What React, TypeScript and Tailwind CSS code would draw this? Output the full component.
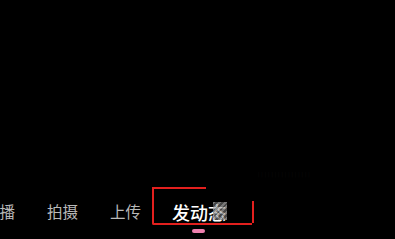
import React from "react";

const tabs = ["直播", "拍摄", "上传"];

export default function App() {
  return (
    <div
      className="relative w-[395px] h-[239px] bg-black overflow-hidden"
      style={{ fontFamily: '"Noto Sans CJK SC", "Noto Sans", sans-serif' }}
    >
      {/* faint caption near the top right */}
      <div className="absolute left-[258px] top-[171px] text-[5px] leading-none tracking-[2px] text-[#0e0e0e]">
        ||||||||||||||||
      </div>

      <div className="flex flex-col pt-[200px]">
        <div className="flex items-center h-[24px] -ml-[16px]">
          {tabs.map((t) => (
            <div key={t} className="mr-[32px] text-[15.5px] leading-none text-[#b8b8b8]">
              {t}
            </div>
          ))}
          <div className="relative -ml-[1px] text-[18px] leading-none font-medium text-white">
            发动态
            <span className="absolute right-[-1px] top-[-1px] w-[14px] h-[18px] bg-[repeating-linear-gradient(135deg,rgba(170,170,170,0.7)_0px,rgba(170,170,170,0.7)_2px,rgba(100,100,100,0.7)_2px,rgba(100,100,100,0.7)_4px)]" />
          </div>
        </div>
      </div>

      {/* pink active indicator */}
      <div className="absolute left-[192px] top-[229px] w-[13px] h-[4px] rounded-full bg-[#ef7fae]" />

      {/* red annotation box */}
      <div className="absolute left-[152px] top-[187px] w-[100px] h-[38px] border-l-2 border-b-2 border-[#e3201e] rounded-bl-[2px]">
        <div className="absolute left-0 top-0 w-[52px] h-[2px] bg-[#e3201e]" />
        <div className="absolute right-[-2px] bottom-0 w-[2px] h-[22px] bg-[#e3201e]" />
      </div>
    </div>
  );
}
